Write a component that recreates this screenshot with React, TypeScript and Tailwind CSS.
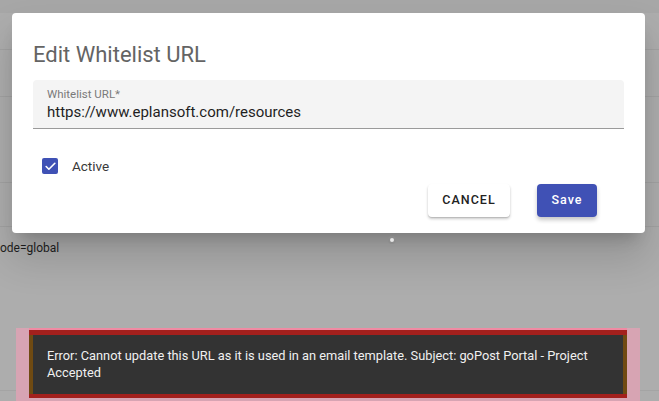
import { Check } from "lucide-react";

export default function App() {
  return (
    <div className="relative w-[659px] h-[401px] overflow-hidden bg-[#adadad] font-['Roboto',sans-serif]">
      {/* Page behind the backdrop */}
      <div className="flex flex-col h-full">
        <div className="h-[13px] bg-[#a7a7a7]" />
        <div className="h-[37px] border-b border-[#a2a2a2]" />
        <div className="h-[47px] border-b border-[#a2a2a2]" />
        <div className="h-[86px] border-b border-[#a2a2a2]" />
        <div className="h-[44px] border-b border-[#a2a2a2]" />
        <div className="pt-[11px] text-[12px] leading-[20px] text-[#1e1e1e]">ode=global</div>
        <div className="flex-1" />
        <div className="h-[11px] border-t border-[#a4a4a4]" />
      </div>

      {/* Dialog */}
      <div className="absolute left-[12px] top-[13px] w-[633px] h-[220px] bg-white rounded-[4px] shadow-[0_11px_15px_-7px_rgba(0,0,0,0.2),0_24px_38px_3px_rgba(0,0,0,0.14)] px-[21px] pt-[26px] flex flex-col">
        <h2 className="text-[22px] leading-[32px] text-[#646464] font-normal">Edit Whitelist URL</h2>

        <div className="mt-[9px] h-[49px] bg-[#f4f4f4] rounded-t-[4px] border-b border-[#9a9a9a] px-[14px] pt-[7px]">
          <div className="text-[11.5px] leading-[14px] text-[#7a7a7a]">Whitelist URL*</div>
          <div className="text-[15px] leading-[22px] text-[#1f1f1f]">https://www.eplansoft.com/resources</div>
        </div>

        <div className="mt-[27px] flex items-center pl-[9px]">
          <span className="w-[16px] h-[16px] rounded-[2px] bg-[#3f51b5] flex items-center justify-center">
            <Check size={13} strokeWidth={3} color="white" />
          </span>
          <span className="ml-[14px] text-[13.5px] text-[#3a3a3a]">Active</span>
        </div>

        <div className="mt-[8px] flex justify-end gap-[27px] pr-[27px]">
          <button className="w-[82px] h-[33px] rounded-[4px] bg-white shadow-[0_2px_3px_rgba(0,0,0,0.2),0_1px_1px_rgba(0,0,0,0.12)] text-[12.5px] font-medium tracking-[1px] text-[#222]">
            CANCEL
          </button>
          <button className="w-[60px] h-[33px] rounded-[4px] bg-[#4051b5] shadow-[0_3px_4px_rgba(0,0,0,0.22)] text-[12.5px] font-medium tracking-[1px] text-white">
            Save
          </button>
        </div>
      </div>

      {/* Mouse cursor */}
      <span className="absolute left-[388px] top-[236px] w-[8px] h-[8px] rounded-full bg-[#e8e8e8] border-2 border-[#8c8c8c]" />

      {/* Error snackbar */}
      <div className="absolute left-[16px] top-[328px] w-[624px] h-[73px] bg-[#d7a4b3] pl-[13px]">
        <div className="w-[598px] h-[70px] border-t-[2px] border-[#f08aa3] bg-[#a3201d] pt-[5px] pb-[4px]">
          <div className="h-full border-x-[4px] border-[#6f4a12] bg-[#333333] pl-[14px] pt-[12px] text-[12.8px] leading-[17px] text-[#f0f0f0]">
            Error: Cannot update this URL as it is used in an email template. Subject: goPost Portal - Project Accepted
          </div>
        </div>
      </div>
    </div>
  );
}
